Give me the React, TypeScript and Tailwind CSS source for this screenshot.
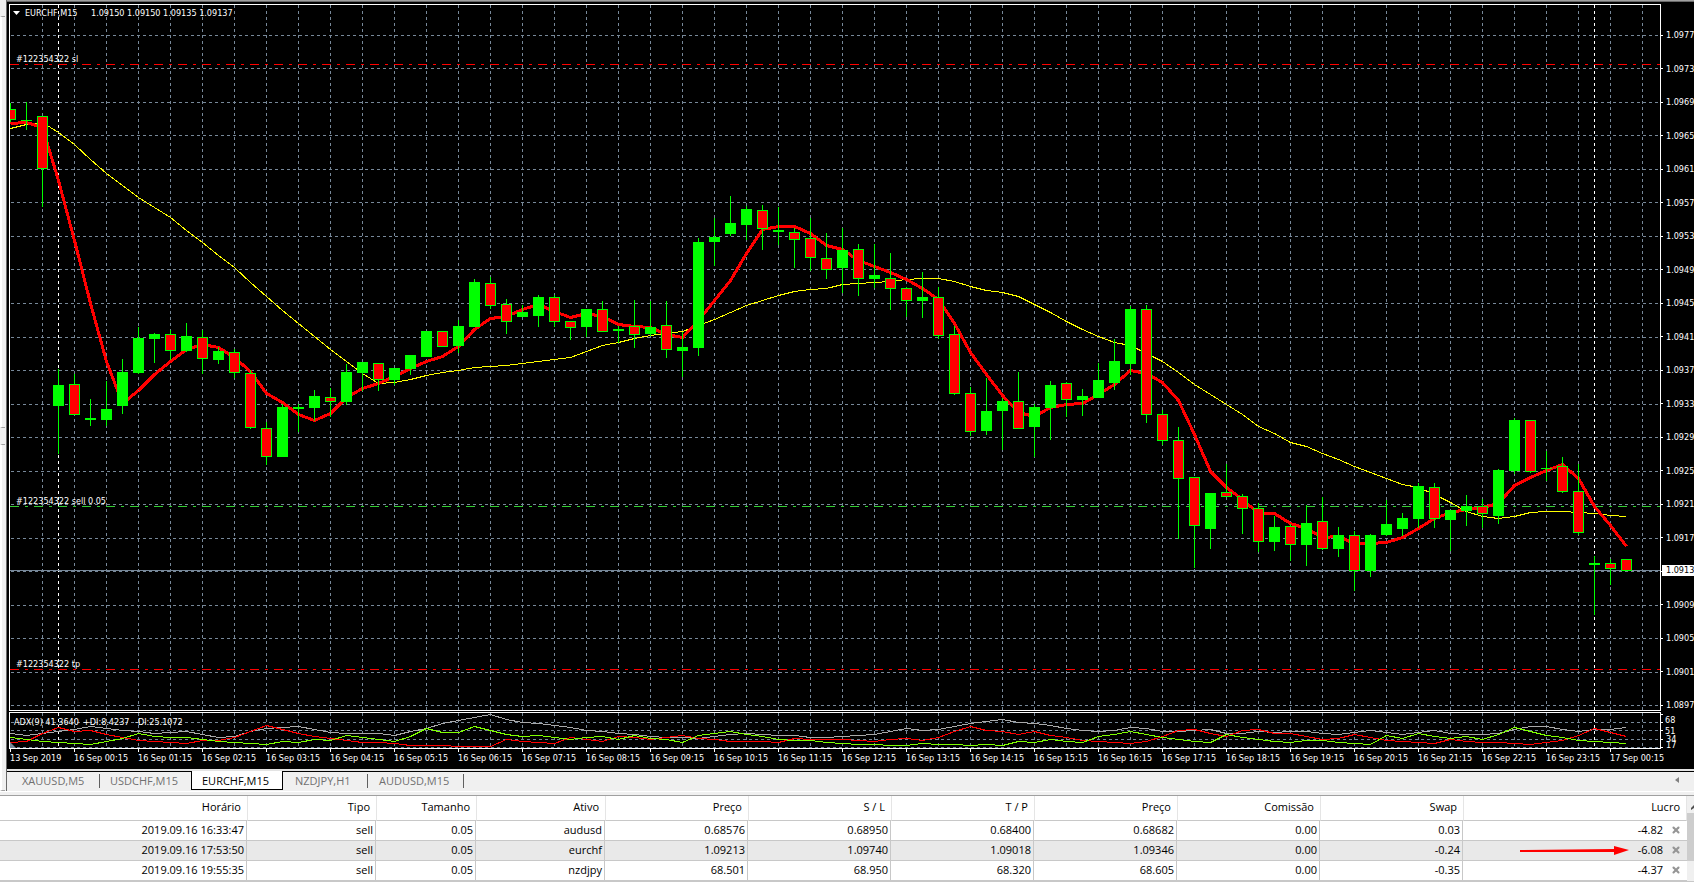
import { X } from "lucide-react";

type Direction = "up" | "down";
// [body top, body bottom, wick top, wick bottom, direction]
type Candle = [number, number, number, number, Direction];

const STEP = 16;

const candles: Candle[] = [
  [109, 120, 103, 122, "down"],
  [120, 121, 102, 130, "up"],
  [116, 169, 116, 207, "down"],
  [385, 406, 369, 454, "up"],
  [384, 415, 374, 415, "down"],
  [418, 420, 399, 426, "up"],
  [409, 420, 381, 426, "up"],
  [372, 406, 359, 414, "up"],
  [338, 373, 327, 374, "up"],
  [334, 339, 333, 363, "up"],
  [334, 351, 330, 360, "down"],
  [336, 351, 323, 352, "up"],
  [337, 359, 330, 374, "down"],
  [351, 360, 347, 364, "up"],
  [352, 373, 349, 378, "down"],
  [373, 428, 370, 429, "down"],
  [428, 457, 422, 465, "down"],
  [407, 457, 404, 457, "up"],
  [407, 409, 404, 432, "up"],
  [396, 408, 390, 421, "up"],
  [397, 402, 388, 417, "down"],
  [372, 402, 364, 405, "up"],
  [362, 373, 362, 391, "up"],
  [363, 380, 363, 391, "down"],
  [368, 380, 368, 385, "up"],
  [355, 369, 355, 375, "up"],
  [331, 357, 331, 357, "up"],
  [331, 347, 331, 347, "down"],
  [326, 346, 320, 353, "up"],
  [282, 327, 279, 327, "up"],
  [283, 306, 277, 309, "down"],
  [304, 322, 299, 334, "down"],
  [312, 317, 305, 317, "up"],
  [297, 316, 295, 327, "up"],
  [297, 322, 295, 327, "down"],
  [321, 328, 321, 340, "down"],
  [309, 327, 309, 337, "up"],
  [309, 332, 301, 332, "down"],
  [329, 331, 326, 343, "up"],
  [326, 335, 300, 348, "down"],
  [327, 334, 301, 336, "up"],
  [325, 350, 301, 358, "down"],
  [347, 351, 332, 377, "up"],
  [242, 348, 238, 356, "up"],
  [237, 242, 218, 266, "up"],
  [223, 234, 196, 236, "up"],
  [209, 225, 206, 240, "up"],
  [210, 229, 205, 250, "down"],
  [230, 232, 207, 245, "up"],
  [232, 240, 228, 268, "down"],
  [238, 258, 218, 271, "down"],
  [258, 270, 233, 279, "down"],
  [250, 268, 228, 293, "up"],
  [249, 279, 244, 296, "down"],
  [275, 279, 244, 288, "up"],
  [278, 289, 253, 310, "down"],
  [288, 301, 287, 317, "down"],
  [297, 301, 272, 318, "up"],
  [297, 336, 287, 339, "down"],
  [334, 394, 326, 395, "down"],
  [393, 432, 387, 436, "down"],
  [411, 431, 378, 435, "up"],
  [401, 411, 398, 450, "up"],
  [401, 429, 372, 429, "down"],
  [407, 427, 404, 457, "up"],
  [385, 408, 381, 440, "up"],
  [383, 400, 382, 417, "down"],
  [396, 400, 389, 416, "up"],
  [380, 398, 363, 398, "up"],
  [361, 383, 339, 390, "up"],
  [309, 364, 306, 375, "up"],
  [309, 415, 305, 423, "down"],
  [414, 441, 410, 445, "down"],
  [440, 479, 427, 539, "down"],
  [477, 526, 477, 568, "down"],
  [493, 529, 493, 549, "up"],
  [492, 497, 464, 497, "down"],
  [496, 509, 494, 534, "down"],
  [508, 542, 503, 552, "down"],
  [527, 542, 516, 551, "up"],
  [526, 545, 524, 561, "down"],
  [523, 545, 505, 566, "up"],
  [521, 549, 497, 550, "down"],
  [535, 549, 527, 557, "up"],
  [535, 571, 531, 591, "down"],
  [535, 571, 534, 577, "up"],
  [524, 535, 500, 536, "up"],
  [518, 529, 513, 536, "up"],
  [486, 519, 483, 528, "up"],
  [487, 519, 483, 528, "down"],
  [510, 520, 510, 551, "up"],
  [506, 511, 495, 526, "up"],
  [506, 514, 499, 528, "down"],
  [470, 516, 469, 524, "up"],
  [420, 471, 418, 474, "up"],
  [420, 472, 420, 473, "down"],
  [468, 469, 451, 481, "up"],
  [466, 492, 457, 493, "down"],
  [491, 533, 464, 535, "down"],
  [563, 565, 556, 615, "up"],
  [563, 569, 559, 585, "down"],
  [559, 571, 559, 571, "down"],
];

const fastAverage = [
  123, 122, 127, 180, 240, 303, 361, 403, 390, 374, 361, 349, 344, 347, 357,
  371, 393, 402, 414, 420, 413, 397, 388, 383, 376, 368, 361, 356, 346, 329,
  318, 316, 309, 304, 311, 317, 313, 316, 324, 326, 327, 334, 337, 320, 300,
  280, 253, 229, 226, 226, 233, 245, 249, 260, 266, 272, 279, 288, 299, 323,
  352, 374, 395, 412, 416, 407, 404, 403, 394, 384, 370, 373, 382, 400, 434,
  471, 487, 499, 513, 513, 523, 528, 537, 536, 543, 543, 542, 537, 528, 518,
  512, 509, 507, 503, 485, 477, 470, 464, 478, 506, 525, 546,
];

const slowAverage = [
  128, 124, 122, 132, 144, 159, 173, 185, 197, 207, 217, 230, 242, 255, 267,
  282, 296, 310, 323, 336, 349, 361, 373, 383, 382, 379, 375, 372, 370, 367,
  366, 365, 363, 361, 359, 357, 351, 345, 342, 338, 335, 333, 331, 325, 319,
  312, 305, 300, 295, 291, 289, 288, 284, 283, 282, 281, 279, 278, 278, 281,
  286, 290, 292, 296, 304, 312, 321, 329, 336, 342, 345, 353, 361, 372, 384,
  394, 404, 414, 426, 433, 442, 446, 453, 459, 466, 472, 478, 484, 487, 494,
  502, 511, 516, 518, 516, 512, 511, 511, 512, 513, 515, 516,
];

const adx = [
  733, 735, 733, 731, 729, 726, 728, 730, 731, 733, 732, 731, 734, 737, 736,
  731, 728, 727, 726, 729, 732, 733, 733, 733, 735, 731, 728, 723, 720, 717,
  714, 719, 722, 723, 725, 727, 730, 731, 733, 734, 736, 737, 737, 738, 736,
  734, 733, 734, 735, 735, 737, 737, 736, 735, 734, 731, 728, 730, 729, 726,
  723, 721, 719, 722, 723, 725, 728, 730, 731, 730, 727, 728, 731, 731, 730,
  729, 733, 733, 731, 732, 731, 731, 733, 734, 732, 730, 732, 734, 732, 730,
  733, 734, 734, 733, 729, 726, 726, 729, 731, 729, 729, 727,
];

const minusDi = [
  742, 741, 733, 727, 731, 730, 734, 737, 740, 741, 742, 743, 740, 740, 737,
  731, 725, 729, 733, 736, 738, 740, 742, 742, 743, 745, 745, 745, 746, 746,
  746, 739, 741, 742, 743, 737, 739, 741, 736, 737, 739, 737, 735, 738, 739,
  741, 741, 741, 742, 738, 739, 739, 739, 740, 741, 739, 738, 740, 737, 731,
  726, 730, 731, 734, 731, 735, 737, 740, 741, 742, 743, 741, 736, 730, 729,
  733, 736, 730, 729, 733, 733, 736, 739, 738, 734, 737, 740, 741, 742, 743,
  739, 741, 742, 742, 743, 744, 742, 740, 735, 728, 732, 736,
];

const plusDi = [
  737, 739, 741, 742, 743, 744, 741, 738, 733, 736, 737, 737, 739, 741, 742,
  743, 744, 741, 742, 739, 740, 735, 737, 739, 741, 736, 728, 732, 732, 726,
  730, 734, 736, 735, 737, 739, 737, 736, 739, 735, 738, 739, 742, 735, 733,
  731, 734, 736, 739, 740, 740, 742, 743, 744, 744, 745, 745, 743, 744, 744,
  745, 744, 745, 741, 742, 739, 741, 742, 736, 734, 731, 734, 737, 739, 741,
  742, 734, 737, 739, 741, 742, 740, 740, 742, 743, 744, 735, 738, 733, 736,
  738, 736, 739, 734, 727, 731, 735, 737, 740, 741, 742, 743,
];

const priceRows = [
  35, 68, 102, 135, 169, 202, 236, 269, 303, 337, 370, 404, 437, 471, 504, 538,
  571, 605, 638, 672, 705,
];

const priceLabels = priceRows.map((_, i) => (1.0977 - i * 0.0004).toFixed(4));

const timeColumns = Array.from({ length: 51 }, (_, i) => 32 + i * 32);

const timeLabels = [
  "13 Sep 2019",
  ...Array.from(
    { length: 24 },
    (_, hour) => `16 Sep ${String(hour).padStart(2, "0")}:15`,
  ),
  "17 Sep 00:15",
];

const daySeparators = [48, 1584];

const tabs = [
  { name: "XAUUSD,M5", className: "w-[93px] border-r pl-[15px]" },
  { name: "USDCHF,M15", className: "w-[91px] pl-[10px]" },
  { name: "EURCHF,M15", className: "w-[92px] pl-[10px]" },
  { name: "NZDJPY,H1", className: "w-[85px] border-r pl-3" },
  { name: "AUDUSD,M15", className: "w-24 border-r pl-[11px]" },
];

const columns = [
  { title: "Horário", width: "w-[247px]" },
  { title: "Tipo", width: "w-[129px]" },
  { title: "Tamanho", width: "w-[100px]" },
  { title: "Ativo", width: "w-[129px]" },
  { title: "Preço", width: "w-[143px]" },
  { title: "S / L", width: "w-[143px]" },
  { title: "T / P", width: "w-[143px]" },
  { title: "Preço", width: "w-[143px]" },
  { title: "Comissão", width: "w-[143px]" },
  { title: "Swap", width: "w-[143px]" },
];

const orders = [
  {
    cells: ["2019.09.16 16:33:47", "sell", "0.05", "audusd", "0.68576", "0.68950", "0.68400", "0.68682", "0.00", "0.03"],
    profit: "-4.82",
    selected: false,
  },
  {
    cells: ["2019.09.16 17:53:50", "sell", "0.05", "eurchf", "1.09213", "1.09740", "1.09018", "1.09346", "0.00", "-0.24"],
    profit: "-6.08",
    selected: true,
  },
  {
    cells: ["2019.09.16 19:55:35", "sell", "0.05", "nzdjpy", "68.501", "68.950", "68.320", "68.605", "0.00", "-0.35"],
    profit: "-4.37",
    selected: false,
  },
];

const toPoints = (values: number[]) =>
  values.map((y, i) => `${i * STEP + 0.5},${y + 0.5}`).join(" ");

const Grid = ({ rows, top, bottom }: { rows: number[]; top: number; bottom: number }) => (
  <g shapeRendering="crispEdges" strokeDasharray="3 3" stroke="#778899">
    {rows.map((y) => (
      <line key={y} x1="1" x2="100%" y1={y + 0.5} y2={y + 0.5} />
    ))}
    {timeColumns.map((x) => (
      <line key={x} x1={x + 0.5} x2={x + 0.5} y1={top} y2={bottom} />
    ))}
    {daySeparators.map((x) => (
      <line key={x} x1={x + 0.5} x2={x + 0.5} y1={top} y2={bottom} stroke="#fff" />
    ))}
  </g>
);

const PriceChart = () => (
  <svg className="block h-[705px] w-full" role="img" aria-label="EURCHF M15">
    <g transform="translate(0 -5)">
      <Grid rows={priceRows} top={5} bottom={710} />
      <g shapeRendering="crispEdges" strokeDasharray="9 6 3 6">
        <line x1="0" x2="100%" y1="64.5" y2="64.5" stroke="#f00" />
        <line x1="0" x2="100%" y1="506.5" y2="506.5" stroke="#32cd32" />
        <line x1="0" x2="100%" y1="669.5" y2="669.5" stroke="#f00" />
      </g>
      <rect x="0" y="570" width="100%" height="1" fill="#778899" />
      <polyline
        points={toPoints(slowAverage)}
        fill="none"
        stroke="#ff0"
        shapeRendering="crispEdges"
      />
      <polyline
        points={toPoints(fastAverage)}
        fill="none"
        stroke="#f00"
        strokeWidth="3"
        strokeLinejoin="round"
        shapeRendering="crispEdges"
      />
      {candles.map(([top, bottom, high, low, direction], i) => (
        <g key={i} shapeRendering="crispEdges">
          <rect x={i * STEP} y={high} width="1" height={low - high} fill="#0f0" />
          <rect x={i * STEP - 5} y={top} width="11" height={bottom - top} fill="#0f0" />
          {direction === "down" && (
            <rect
              x={i * STEP - 4}
              y={top + 1}
              width="9"
              height={bottom - top - 2}
              fill="#f00"
            />
          )}
        </g>
      ))}
      <path d="M3 11h7l-3.500 4z" fill="#fff" />
      <g fill="#fff">
        <text x="15" y="16">EURCHF,M15</text>
        <text x="81" y="16">1.09150 1.09150 1.09135 1.09137</text>
        <text x="6" y="62">#122354322 sl</text>
        <text x="6" y="504">#122354322 sell 0.05</text>
        <text x="6" y="667">#122354322 tp</text>
      </g>
    </g>
  </svg>
);

const AdxChart = () => (
  <svg className="block h-[35px] w-full" role="img" aria-label="ADX">
    <g transform="translate(0 -713)">
      <Grid rows={[722, 730, 739, 747]} top={713} bottom={748} />
      <g fill="none" shapeRendering="crispEdges">
        <polyline points={toPoints(adx)} stroke="#a9a9a9" />
        <polyline points={toPoints(minusDi)} stroke="#f00" />
        <polyline points={toPoints(plusDi)} stroke="#7fff00" />
      </g>
      <path d="M0 742l6 6h-6z" fill="#778899" />
      <g fill="#fff">
        <text x="4" y="725">ADX(9) 41.3640</text>
        <text x="73" y="725">+DI:8.4237</text>
        <text x="125" y="725">-DI:25.1072</text>
      </g>
    </g>
  </svg>
);

const ChartWindow = () => (
  <section className="overflow-hidden border-t border-[#a0a0a0] bg-black font-['DejaVu_Sans_Condensed','Noto_Sans',sans-serif] text-[9px] text-white">
    <div className="border-t border-[#696969] pt-0.5 pl-0.5">
      <div className="flex">
        <div className="min-w-0 flex-1 border border-white">
          <PriceChart />
        </div>
        <div className="relative w-[33px] overflow-hidden pt-[25px]">
          <ul className="flex h-[682px] flex-col justify-between">
            {priceLabels.map((label) => (
              <li key={label} className="flex items-center gap-[3px] leading-3">
                <span className="h-px w-0.5 shrink-0 bg-white" />
                {label}
              </li>
            ))}
          </ul>
          <span className="absolute top-[561px] right-0 left-px bg-white pl-1 leading-[11px] text-black">
            1.0913
          </span>
        </div>
      </div>
      <div className="mt-px flex">
        <div className="min-w-0 flex-1 border border-white">
          <AdxChart />
        </div>
        <svg className="block h-[37px] w-[33px]" fill="#fff">
          <path d="M0 2h2v1H0zM0 10h2v1H0zM0 18h2v1H0zM0 27h2v1H0zM0 35h2v1H0z" />
          <text x="4" y="11">68</text>
          <text x="4" y="22">51</text>
          <text x="5" y="30">34</text>
          <text x="5" y="36">17</text>
        </svg>
      </div>
      <ul className="flex h-5 pl-px">
        {timeLabels.map((label) => (
          <li key={label} className="w-16 shrink-0 whitespace-nowrap">
            <span className="block h-[3px] w-px bg-white" />
            <span className="block leading-3">{label}</span>
          </li>
        ))}
      </ul>
    </div>
  </section>
);

const ChartTabs = () => (
  <nav className="flex h-5 items-start border-t border-black">
    {tabs.map((tab) =>
      tab.name === "EURCHF,M15" ? (
        <button
          key={tab.name}
          type="button"
          className={`-mt-px h-[19px] border border-t-0 border-black bg-white pt-px text-left leading-4 text-black ${tab.className}`}
        >
          {tab.name}
        </button>
      ) : (
        <button
          key={tab.name}
          type="button"
          className={`mt-0.5 h-3.5 border-[#606060] text-left leading-3.5 text-[#707070] ${tab.className}`}
        >
          {tab.name}
        </button>
      ),
    )}
    <button type="button" aria-label="Scroll tabs left" className="mt-1 mr-[15px] ml-auto">
      <svg className="block h-2 w-1" viewBox="0 0 4 8" fill="#808080">
        <path d="M4 1v6L0 4z" />
      </svg>
    </button>
  </nav>
);

const OrdersTable = () => (
  <section className="flex border-t border-[#a0a0a0] bg-white">
    <table className="min-w-0 flex-1 table-fixed border-separate border-spacing-0 text-right text-[11px] whitespace-nowrap text-black">
      <thead>
        <tr className="h-[25px]">
          {columns.map((column, i) => (
            <th
              key={i}
              className={`border-b border-b-[#c8c8c8] pr-1.5 pb-0.5 font-normal ${column.width} ${
                i > 0 ? "border-l border-l-[#e5e5e5]" : ""
              }`}
            >
              {column.title}
            </th>
          ))}
          <th className="border-x border-b border-x-[#e5e5e5] border-b-[#c8c8c8] pr-1.5 pb-0.5 font-normal">
            Lucro
          </th>
        </tr>
      </thead>
      <tbody>
        {orders.map((order) => (
          <tr key={order.profit} className={`h-5 ${order.selected ? "bg-[#e9e9e9]" : ""}`}>
            {order.cells.map((cell, i) => (
              <td key={i} className="border-r border-b border-[#c8c8c8] pr-0.5 pb-0.5 leading-4">
                {cell}
              </td>
            ))}
            <td className="relative border-b border-[#c8c8c8] pb-0.5 leading-4">
              {order.selected && (
                <svg
                  className="absolute top-1 right-[58px] h-[11px] w-[110px]"
                  viewBox="0 0 110 11"
                  fill="#f00"
                >
                  <path d="M1 5l94-1V1l15 4-15 5V7L1 7z" />
                </svg>
              )}
              <span className="flex items-center justify-end gap-2 pr-1.5">
                {order.profit}
                <button type="button" aria-label={`Close order ${order.cells[3]}`}>
                  <X className="size-2.5 text-[#969696]" strokeWidth={5} />
                </button>
              </span>
            </td>
          </tr>
        ))}
      </tbody>
    </table>
    <div className="w-[7px] bg-[#f0f0f0] pt-2">
      <svg className="block h-[9px] w-[7px]" fill="#505050">
        <path d="M4 4l3-3v3L4 6z" />
      </svg>
      <div className="h-12 bg-[#cdcdcd]" />
    </div>
  </section>
);

const App = () => (
  <main className="min-h-screen bg-[#c8c8c8] font-['Open_Sans','Noto_Sans',sans-serif] text-[11px]">
    <div className="flex bg-[#f0f0f0]">
      <aside className="flex w-[7px] shrink-0 flex-col border-r border-[#696969] pt-4">
        <div className="h-[412px] w-[5px] border-y border-l-2 border-y-[#a0a0a0] border-l-white" />
        <div className="mt-4 w-[5px] flex-1 border-y border-l-2 border-y-[#a0a0a0] border-l-white" />
      </aside>
      <div className="min-w-0 flex-1">
        <ChartWindow />
        <div className="h-0.5 bg-[#e3e3e3]" />
        <ChartTabs />
      </div>
    </div>
    <div className="h-1 border-t border-white bg-[#f0f0f0]" />
    <OrdersTable />
  </main>
);

export default App;
